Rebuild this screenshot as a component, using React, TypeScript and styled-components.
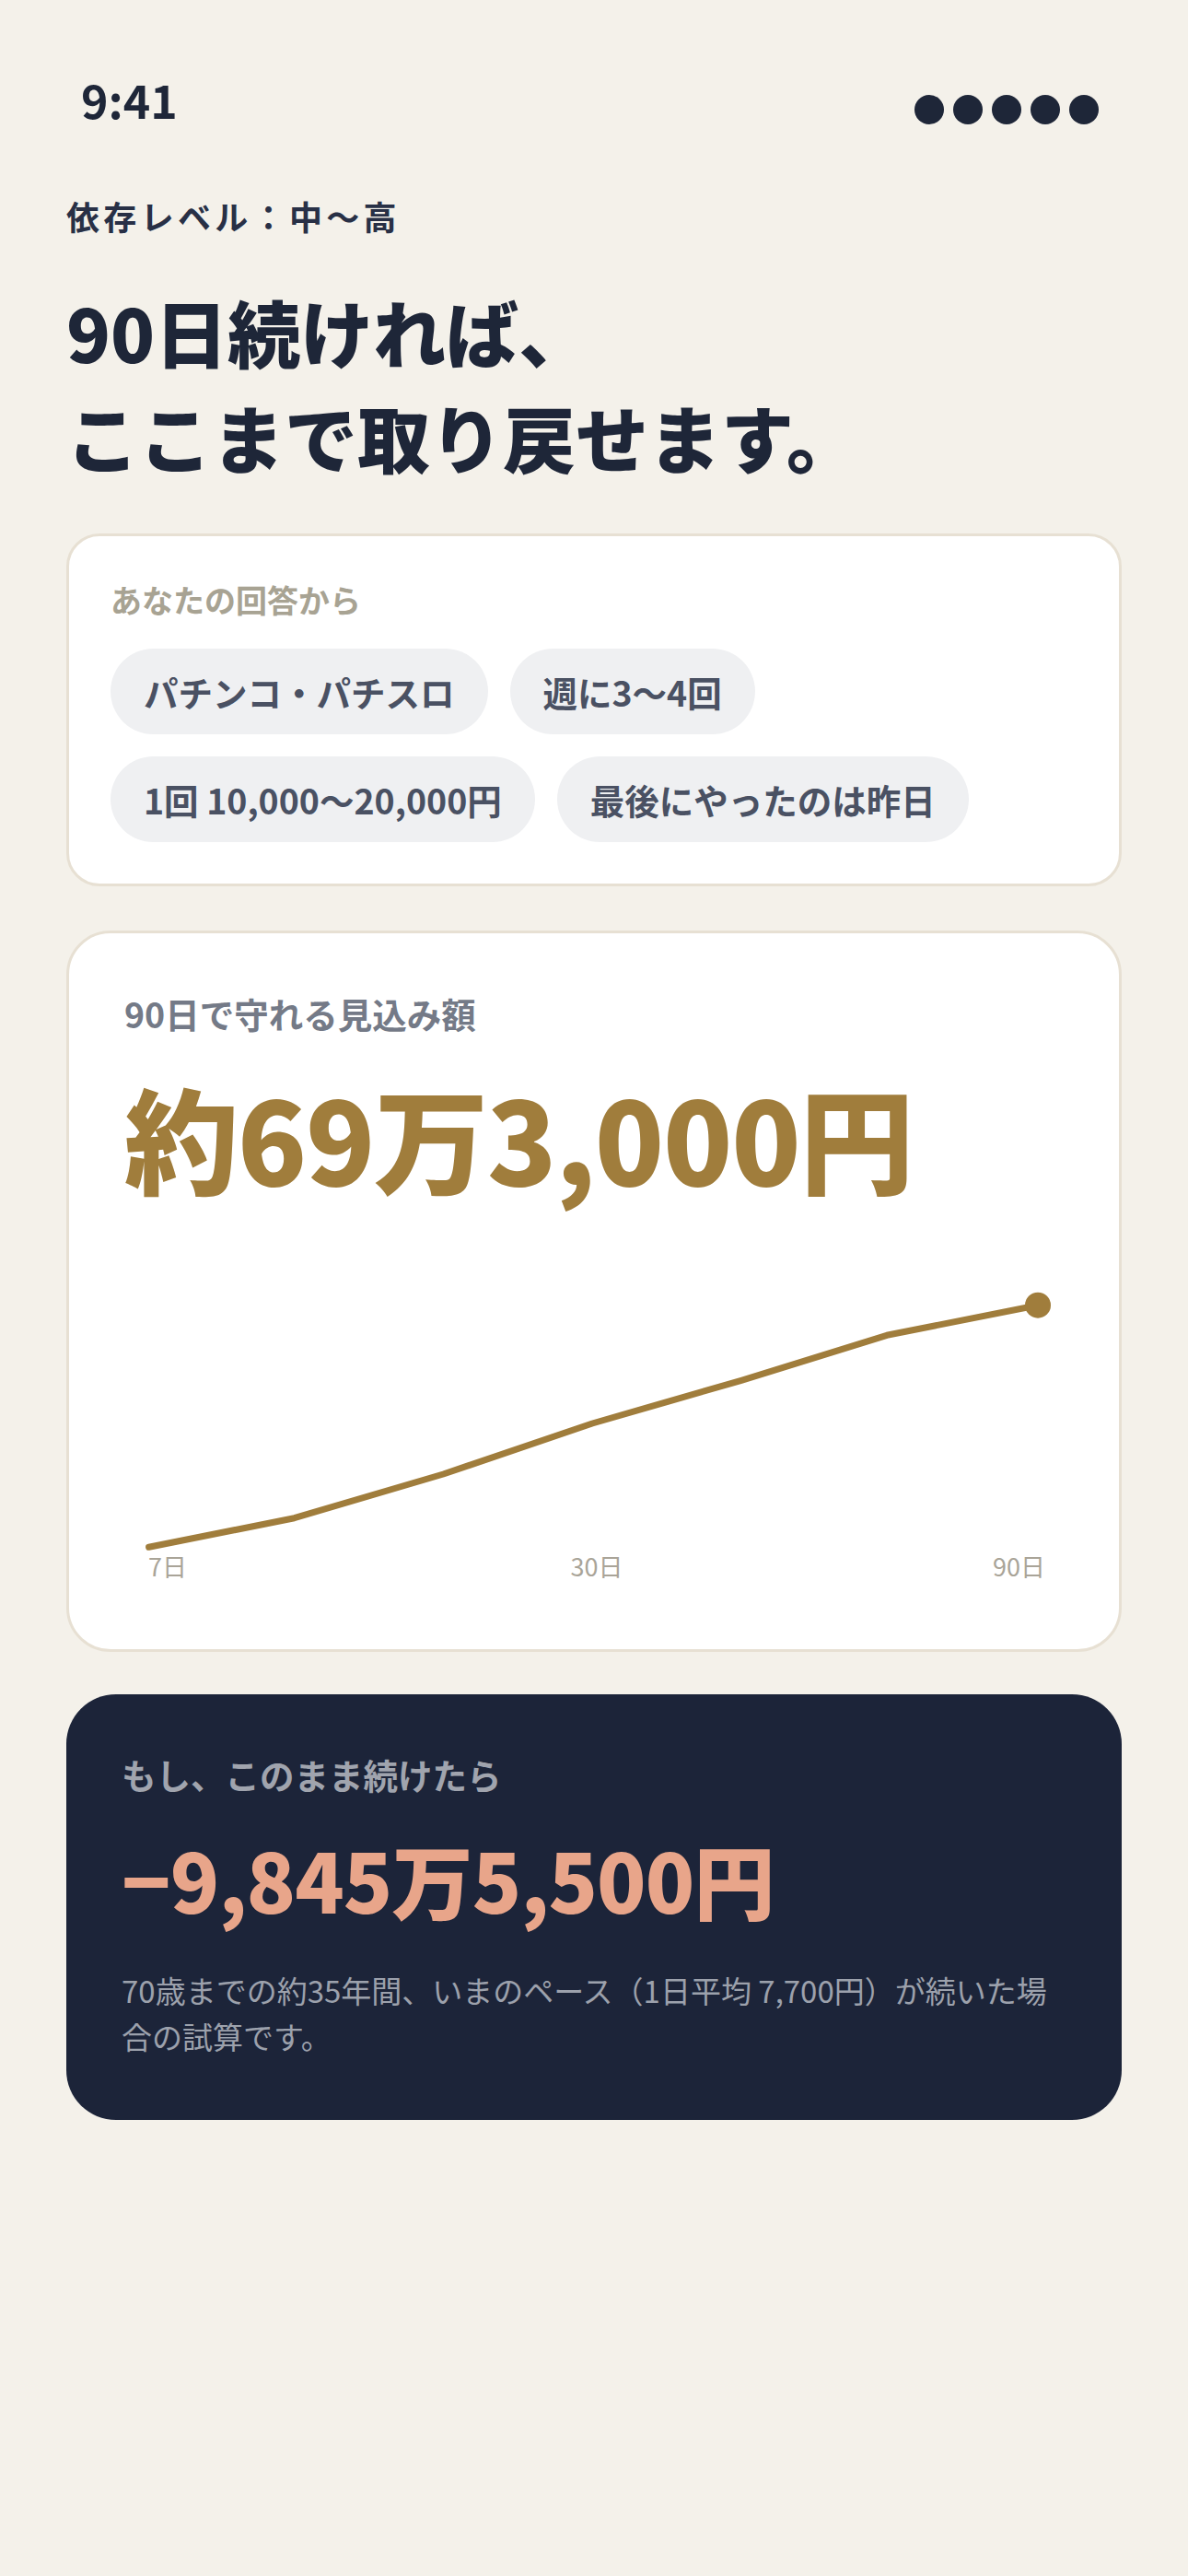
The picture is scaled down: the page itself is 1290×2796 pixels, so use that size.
import React from "react";
import styled, { createGlobalStyle } from "styled-components";

const GlobalStyle = createGlobalStyle`
  html, body {
    margin: 0;
    padding: 0;
    background: #f4f1ea;
  }
  body {
    font-family: "Noto Sans CJK JP", "Noto Sans", sans-serif;
    -webkit-font-smoothing: antialiased;
  }
  * { box-sizing: border-box; }
`;

const Page = styled.div`
  width: 1290px;
  min-height: 2796px;
  background: #f4f1ea;
  padding: 0 72px 120px;
  display: flex;
  flex-direction: column;
`;

const StatusBar = styled.div`
  display: flex;
  justify-content: space-between;
  align-items: flex-start;
  padding: 77px 25px 0 16px;
  height: 137px;
`;

const Time = styled.span`
  font-size: 50px;
  line-height: 60px;
  font-weight: 700;
  color: #1e2638;
`;

const Dots = styled.div`
  display: flex;
  gap: 10px;
  padding-top: 26px;
`;

const Dot = styled.span`
  width: 32px;
  height: 32px;
  border-radius: 50%;
  background: #1e2638;
`;

const Level = styled.div`
  margin-top: 72px;
  font-size: 36px;
  line-height: 50px;
  font-weight: 700;
  letter-spacing: 0.12em;
  color: #283046;
`;

const Headline = styled.h1`
  margin: 44px 0 0;
  font-size: 79px;
  line-height: 114px;
  font-weight: 900;
  color: #1e2638;
`;

const AnswerCard = styled.section`
  margin-top: 48px;
  background: #ffffff;
  border: 3px solid #e7e0d3;
  border-radius: 36px;
  padding: 45px;
`;

const AnswerLabel = styled.div`
  font-size: 34px;
  line-height: 48px;
  font-weight: 700;
  color: #a8a393;
`;

const Chips = styled.div`
  margin-top: 29px;
  display: flex;
  flex-wrap: wrap;
  gap: 24px;
`;

const Chip = styled.span`
  display: inline-block;
  padding: 18px 36px;
  font-size: 37.5px;
  line-height: 57px;
  font-weight: 700;
  color: #4a5163;
  background: #eff0f2;
  border-radius: 999px;
  white-space: nowrap;
`;

const SavingsCard = styled.section`
  margin-top: 48px;
  background: #ffffff;
  border: 3px solid #e7e0d3;
  border-radius: 48px;
  padding: 60px;
`;

const CardLabel = styled.div<{ $tone: string }>`
  font-size: 37.5px;
  line-height: 53px;
  font-weight: 700;
  color: ${(p) => p.$tone};
`;

const Amount = styled.div<{ $size: number; $color: string; $gap: number }>`
  margin-top: ${(p) => p.$gap}px;
  font-size: ${(p) => p.$size}px;
  line-height: 1.2;
  font-weight: 900;
  letter-spacing: -0.01em;
  color: ${(p) => p.$color};
  white-space: nowrap;
`;

const ChartWrap = styled.div`
  margin-top: 88px;
  display: flex;
  flex-direction: column;
`;

const ChartSvg = styled.svg`
  display: block;
  width: 100%;
  height: 288px;
  overflow: visible;
`;

const AxisRow = styled.div`
  display: grid;
  grid-template-columns: 1fr auto 1fr;
  padding: 0 20px 14px 26px;
  font-size: 27px;
  line-height: 32px;
  font-weight: 400;
  color: #a9a498;
`;

const AxisLabel = styled.span<{ $align: "left" | "center" | "right" }>`
  text-align: ${(p) => p.$align};
`;

const WarningCard = styled.section`
  margin-top: 46px;
  background: #1c2439;
  border-radius: 54px;
  padding: 60px 60px 66px;
`;

const Note = styled.p`
  margin: 44px 0 0;
  font-size: 33px;
  line-height: 50px;
  font-weight: 400;
  color: #9ca1ac;
`;

const points: Array<[number, number]> = [
  [26.6, 283.3],
  [184.6, 251.7],
  [346.4, 204],
  [508.2, 149],
  [670, 102.3],
  [828, 53.3],
  [992, 20.7],
];

function Chart() {
  const last = points[points.length - 1];
  return (
    <ChartWrap>
      <ChartSvg viewBox="0 0 1020 288" preserveAspectRatio="none">
        <polyline
          points={points.map((p) => p.join(",")).join(" ")}
          fill="none"
          stroke="#a07d3c"
          strokeWidth={7}
          strokeLinecap="round"
          strokeLinejoin="round"
        />
        <circle cx={last[0]} cy={last[1]} r={14} fill="#a07d3c" />
      </ChartSvg>
      <AxisRow>
        <AxisLabel $align="left">7日</AxisLabel>
        <AxisLabel $align="center">30日</AxisLabel>
        <AxisLabel $align="right">90日</AxisLabel>
      </AxisRow>
    </ChartWrap>
  );
}

export default function App() {
  const answers = [
    "パチンコ・パチスロ",
    "週に3〜4回",
    "1回 10,000〜20,000円",
    "最後にやったのは昨日",
  ];
  return (
    <>
      <GlobalStyle />
      <Page>
        <StatusBar>
          <Time>9:41</Time>
          <Dots>
            {[0, 1, 2, 3, 4].map((i) => (
              <Dot key={i} />
            ))}
          </Dots>
        </StatusBar>
        <Level>依存レベル：中〜高</Level>
        <Headline>
          90日続ければ、
          <br />
          ここまで取り戻せます。
        </Headline>
        <AnswerCard>
          <AnswerLabel>あなたの回答から</AnswerLabel>
          <Chips>
            {answers.map((a) => (
              <Chip key={a}>{a}</Chip>
            ))}
          </Chips>
        </AnswerCard>
        <SavingsCard>
          <CardLabel $tone="#747a87">90日で守れる見込み額</CardLabel>
          <Amount $size={124} $color="#a07d3c" $gap={33}>
            約69万3,000円
          </Amount>
          <Chart />
        </SavingsCard>
        <WarningCard>
          <CardLabel $tone="#a0a4ae">もし、このまま続けたら</CardLabel>
          <Amount $size={88} $color="#e8a58a" $gap={34}>
            −9,845万5,500円
          </Amount>
          <Note>
            70歳までの約35年間、いまのペース（1日平均 7,700円）が続いた場合の試算です。
          </Note>
        </WarningCard>
      </Page>
    </>
  );
}
